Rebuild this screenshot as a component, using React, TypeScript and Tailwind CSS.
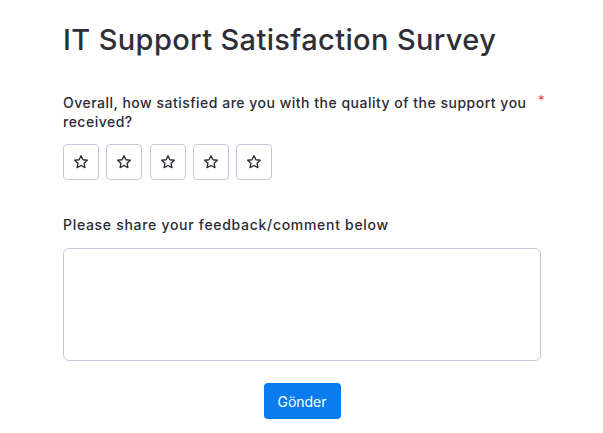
import React from "react";

function Star() {
  return (
    <svg width="16" height="16" viewBox="0 0 24 24" fill="none" stroke="#2b2b35" strokeWidth="2" strokeLinejoin="round">
      <path d="M12 2.5l2.9 6.1 6.6.8-4.9 4.5 1.3 6.6L12 17.2l-5.9 3.3 1.3-6.6-4.9-4.5 6.6-.8z" />
    </svg>
  );
}

export default function App() {
  return (
    <div className="min-h-[433px] w-[603px] bg-white text-[#2b2b35]" style={{ fontFamily: 'Inter, sans-serif' }}>
      <div className="px-[63px] pt-[20px]">
        <h1 className="text-[29px] font-medium leading-[40px] tracking-[0.37px] text-[#2f2f38]">IT Support Satisfaction Survey</h1>
        <div className="mt-[33px] flex">
          <p className="w-[468px] shrink-0 text-[14px] font-medium leading-[19px] tracking-[0.5px]">
            Overall, how satisfied are you with the quality of the support you received?
          </p>
          <span className="ml-[7px] shrink-0 text-[13px] leading-[14px] text-[#e5484d]">*</span>
        </div>
        <div className="mt-[13px] flex gap-[7.25px]">
          {[0, 1, 2, 3, 4].map((i) => (
            <button key={i} className="flex h-[36px] w-[36px] items-center justify-center rounded-[4px] border border-[#c9c6d9] bg-white">
              <Star />
            </button>
          ))}
        </div>
        <p className="mt-[35px] text-[14px] font-medium leading-[20px] tracking-[0.7px]">Please share your feedback/comment below</p>
        <textarea className="mt-[13px] block h-[113px] w-[478px] resize-none rounded-[6px] border border-[#c9c6d9] outline-none" />
        <div className="mt-[22px] flex w-[478px] justify-center">
          <button className="h-[36px] w-[77px] rounded-[4px] bg-[#0a7cf0] text-[14px] text-white">Gönder</button>
        </div>
      </div>
    </div>
  );
}
